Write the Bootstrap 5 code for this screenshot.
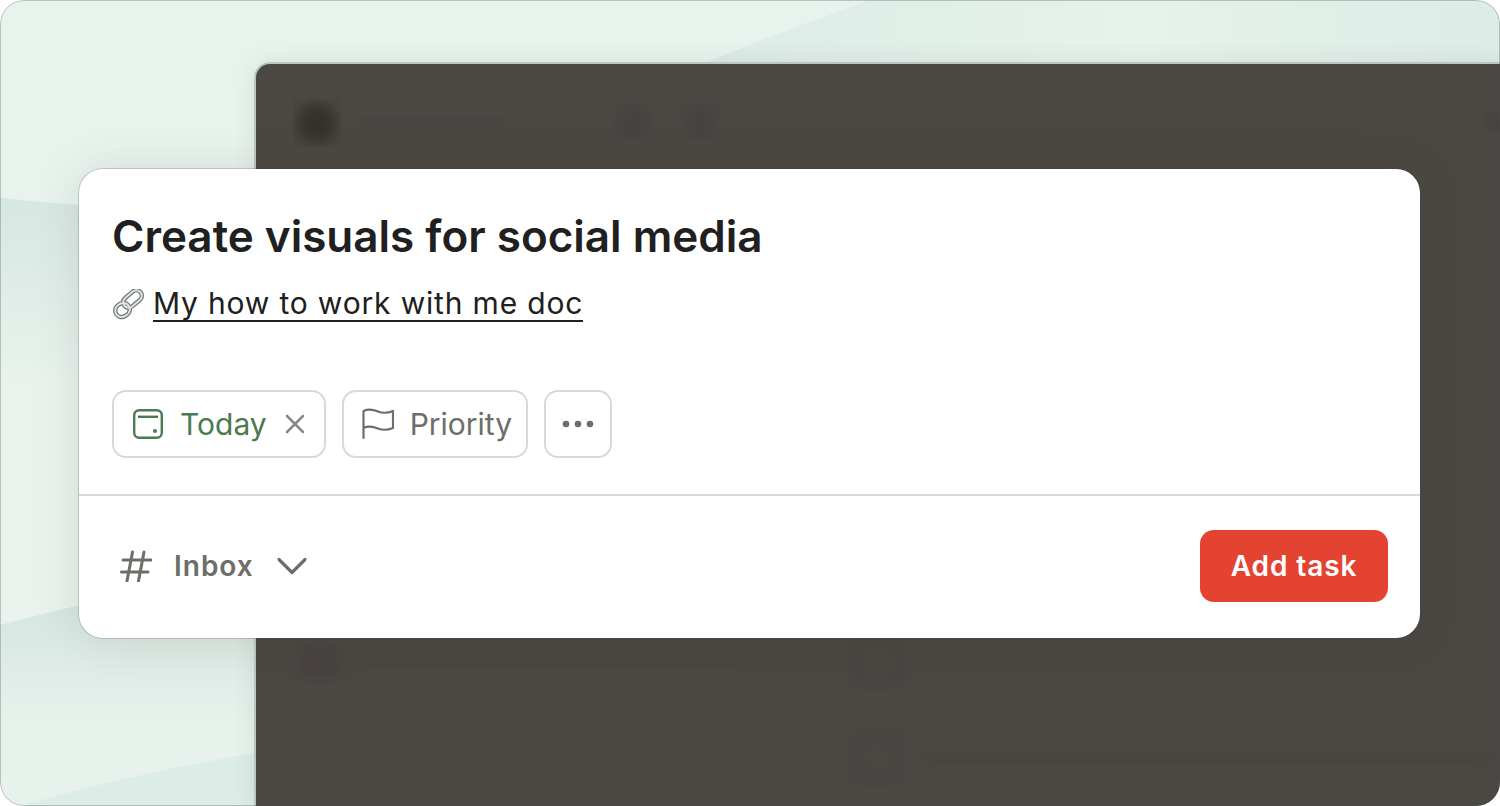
<!DOCTYPE html>
<html lang="en">
<head>
  <meta charset="UTF-8">
  <title>Add task</title>
  <link href="https://cdn.jsdelivr.net/npm/bootstrap@5.3.0/dist/css/bootstrap.min.css" rel="stylesheet">
  <style>
    body { margin: 0; background: #fff; font-family: Inter, "Liberation Sans", sans-serif; overflow: hidden; }
    .stage { position: relative; width: 1500px; height: 806px; overflow: hidden; border-radius: 24px; }
    .stage::after { content: ""; position: absolute; top: 0; left: 0; right: 0; bottom: 0; border: 1px solid rgba(70,80,75,.3); border-radius: 24px; pointer-events: none; }
    .stage-bg { position: absolute; top: 0; left: 0; }
    .app-window {
      position: absolute; left: 254px; top: 62px; right: 0; bottom: 0;
      background: #4b4743; border-top: 2px solid #bcc6c0; border-left: 2px solid #bcc6c0;
      border-top-left-radius: 16px; overflow: hidden; box-shadow: 0 0 22px rgba(70,60,50,.1);
    }
    .ghost { position: absolute; top: 0; left: 0; }
    .task-dialog {
      position: absolute; left: 79px; top: 169px; width: 1341px; height: 469px;
      background: #fff; border-radius: 24px; box-shadow: 0 0 0 1px rgba(60,70,65,.22), 0 0 44px rgba(70,60,50,.13);
    }
    .task-body { padding: 33px 33px 0; height: 325px; }
    .task-title { font-size: 44px; font-weight: 600; line-height: 68px; color: #202020; margin: 0; }
    .task-desc { margin-top: 17px; font-size: 30px; letter-spacing: .82px; line-height: 40px; color: #202020; gap: 9px; }
    .task-desc a { color: #202020; text-decoration: none; border-bottom: 2px solid #202020; line-height: 33px; display: inline-block; }
    .chip-row { margin-top: 68px; gap: 16px; }
    .chip-btn {
      height: 68px; border: 2px solid #d9d9d9; border-radius: 14px; background: #fff;
      font-size: 30px; color: #6d6d69; padding: 0 14px 0 18px; gap: 16px;
    }
    .chip-today { color: #4b7a50; padding-right: 17px; }
    .chip-more { width: 68px; padding: 0; }
    .task-foot { border-top: 2px solid #d9d9d9; height: 144px; padding: 34px 32px 0 41px; }
    .project-pick { font-size: 28px; letter-spacing: 1px; font-weight: 600; color: #6d6d69; gap: 22px; height: 72px; }
    .btn-add {
      width: 188px; height: 72px; background: #e44332; color: #fff; border: 0; border-radius: 14px;
      font-size: 28px; letter-spacing: .9px; font-weight: 600; padding: 0;
    }
    .btn-add:hover { background: #e44332; color: #fff; }
  </style>
</head>
<body>
  <div class="stage">
    <svg class="stage-bg" width="1500" height="806" viewBox="0 0 1500 806">
      <defs>
        <linearGradient id="bandLeft" x1="0" y1="198" x2="0" y2="380" gradientUnits="userSpaceOnUse">
          <stop offset="0" stop-color="#d6e7e1"/><stop offset="1" stop-color="#e9f2ed"/>
        </linearGradient>
        <linearGradient id="bandLow" x1="0" y1="610" x2="0" y2="730" gradientUnits="userSpaceOnUse">
          <stop offset="0" stop-color="#d6e6e0"/><stop offset="1" stop-color="#e8f2ed"/>
        </linearGradient>
        <linearGradient id="bandTop" x1="700" y1="0" x2="1500" y2="0" gradientUnits="userSpaceOnUse">
          <stop offset="0" stop-color="#dcece6"/><stop offset=".55" stop-color="#e6f2ec"/><stop offset="1" stop-color="#dcece6"/>
        </linearGradient>
      </defs>
      <rect width="1500" height="806" fill="#e9f3ee"/>
      <path d="M870 0 C810 22 760 40 702 64 L1500 64 L1500 0 Z" fill="url(#bandTop)"/>
      <path d="M0 198 C30 201 60 204 100 206 V620 L0 640 Z" fill="url(#bandLeft)"/>
      <path d="M0 625 C30 617 60 610 100 600 H260 V806 H0 Z" fill="url(#bandLow)"/>
      <path d="M22 806 C100 782 180 766 260 752 V806 Z" fill="#dcece6"/>
    </svg>
    <div class="app-window">
      <svg class="ghost" width="1246" height="744" viewBox="254 62 1246 744">
        <defs>
          <filter id="blur8"><feGaussianBlur stdDeviation="7"/></filter>
          <filter id="blur4"><feGaussianBlur stdDeviation="5"/></filter>
        </defs>
        <circle cx="315" cy="121" r="20" fill="#33302c" filter="url(#blur8)"/>
        <rect x="360" y="116" width="140" height="8" rx="4" fill="#47433f" filter="url(#blur4)"/>
        <circle cx="631" cy="120" r="16" fill="#464240" filter="url(#blur4)"/>
        <circle cx="698" cy="120" r="16" fill="#464240" filter="url(#blur4)"/>
        <circle cx="1494" cy="120" r="10" fill="#464240" filter="url(#blur4)"/>
        <rect x="296" y="642" width="42" height="36" rx="10" fill="#474340" filter="url(#blur4)"/>
        <rect x="360" y="656" width="380" height="10" rx="5" fill="#484440" filter="url(#blur4)"/>
        <circle cx="875" cy="660" r="24" fill="none" stroke="#474340" stroke-width="7" filter="url(#blur4)"/>
        <circle cx="875" cy="756" r="24" fill="none" stroke="#474340" stroke-width="7" filter="url(#blur4)"/>
        <rect x="925" y="750" width="560" height="12" rx="6" fill="#484440" filter="url(#blur4)"/>
      </svg>
    </div>

    <div class="task-dialog">
      <div class="task-body">
        <h1 class="task-title">Create visuals for social media</h1>
        <div class="task-desc d-flex align-items-center">
          <svg width="32" height="32" viewBox="0 0 32 32" fill="none">
            <g stroke="#6f7674" stroke-width="4.4">
              <rect x="10" y="4.500" width="21" height="11" rx="5.500" transform="rotate(-40 20.500 10)"/>
              <rect x="3" y="14.500" width="15" height="13" rx="6.500" transform="rotate(-35 10.500 21)"/>
            </g>
            <g stroke="#dfe4e2" stroke-width="2">
              <rect x="10" y="4.500" width="21" height="11" rx="5.500" transform="rotate(-40 20.500 10)"/>
              <rect x="3" y="14.500" width="15" height="13" rx="6.500" transform="rotate(-35 10.500 21)"/>
            </g>
          </svg>
          <a href="#">My how to work with me doc</a>
        </div>
        <div class="chip-row d-flex">
          <button type="button" class="chip-btn chip-today d-flex align-items-center">
            <svg width="32" height="32" viewBox="0 0 32 32" fill="none" stroke="#4b7a50" stroke-width="2.4">
              <rect x="2.200" y="2.200" width="27.600" height="27.600" rx="5"/>
              <path d="M6 8.800h20"/>
              <circle cx="23" cy="23" r="2" fill="#4b7a50" stroke="none"/>
            </svg>
            <span>Today</span>
            <svg width="24" height="24" viewBox="0 0 24 24" stroke="#8a8a8a" stroke-width="2.600" stroke-linecap="round">
              <path d="M4 4l16 16M20 4L4 20"/>
            </svg>
          </button>
          <button type="button" class="chip-btn d-flex align-items-center">
            <svg width="32" height="32" viewBox="0 0 32 32" fill="none" stroke="#6d6d69" stroke-width="2.200" stroke-linecap="round" stroke-linejoin="round">
              <path d="M1.500 30V3C6 1 11 1.500 16 3.500C21 5.500 26 5 31 3V20C26 22 21 22.500 16 20.500C11 18.500 6 18 1.500 20"/>
            </svg>
            <span>Priority</span>
          </button>
          <button type="button" class="chip-btn chip-more d-flex align-items-center justify-content-center">
            <svg width="32" height="8" viewBox="0 0 32 8" fill="#6d6d69">
              <circle cx="4" cy="4" r="3.300"/><circle cx="16" cy="4" r="3.300"/><circle cx="28" cy="4" r="3.300"/>
            </svg>
          </button>
        </div>
      </div>
      <div class="task-foot d-flex justify-content-between">
        <div class="project-pick d-flex align-items-center">
          <svg width="32" height="32" viewBox="0 0 32 32" fill="none" stroke="#6d6d69" stroke-width="3" stroke-linecap="round">
            <path d="M12.500 2L7 31M24 2L18.500 31M3 10H31.500M1.500 22H28"/>
          </svg>
          <span>Inbox</span>
          <svg width="32" height="20" viewBox="0 0 32 20" fill="none" stroke="#6d6d69" stroke-width="3.200" stroke-linecap="round" stroke-linejoin="round">
            <path d="M3 3.500L16 16.500L29 3.500"/>
          </svg>
        </div>
        <button type="button" class="btn btn-add">Add task</button>
      </div>
    </div>
  </div>
  <script src="https://cdn.jsdelivr.net/npm/bootstrap@5.3.0/dist/js/bootstrap.bundle.min.js"></script>
</body>
</html>
